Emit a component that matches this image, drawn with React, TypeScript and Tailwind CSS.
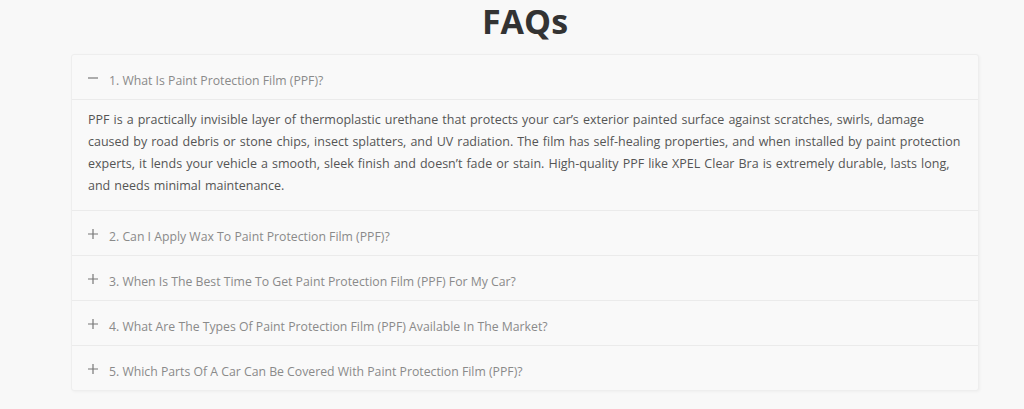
import { useState } from "react";

const faqs = [
  {
    q: "1. What Is Paint Protection Film (PPF)?",
    a: "PPF is a practically invisible layer of thermoplastic urethane that protects your car’s exterior painted surface against scratches, swirls, damage caused by road debris or stone chips, insect splatters, and UV radiation. The film has self-healing properties, and when installed by paint protection experts, it lends your vehicle a smooth, sleek finish and doesn’t fade or stain. High-quality PPF like XPEL Clear Bra is extremely durable, lasts long, and needs minimal maintenance.",
  },
  { q: "2. Can I Apply Wax To Paint Protection Film (PPF)?", a: "" },
  { q: "3. When Is The Best Time To Get Paint Protection Film (PPF) For My Car?", a: "" },
  { q: "4. What Are The Types Of Paint Protection Film (PPF) Available In The Market?", a: "" },
  { q: "5. Which Parts Of A Car Can Be Covered With Paint Protection Film (PPF)?", a: "" },
];

function Icon({ open }: { open: boolean }) {
  return (
    <svg className="w-[10px] h-[10px] text-[#777] mt-[18px] shrink-0" viewBox="0 0 10 10" fill="none" stroke="currentColor" strokeWidth="1.2">
      {open ? <path d="M0 5h10" /> : <path d="M0 5h10M5 0v10" />}
    </svg>
  );
}

export default function App() {
  const [openIdx, setOpenIdx] = useState(0);

  return (
    <div className="min-h-[409px] bg-[#f8f8f8] pl-[26px] pt-[1px] font-['Open_Sans','Liberation_Sans',sans-serif]">
      <h1 className="text-center text-[34px] leading-[40px] font-bold text-[#333]">FAQs</h1>
      <div className="mx-auto mt-[13px] w-[908px] bg-[#f9f9f9] border border-[#eeeeee] rounded-[3px] shadow-[1px_1px_3px_rgba(0,0,0,0.04)]">
        {faqs.map((f, i) => (
          <div key={i} className={i > 0 ? "border-t border-[#ebebeb]" : ""}>
            <button
              onClick={() => setOpenIdx(openIdx === i ? -1 : i)}
              className="flex w-full h-[44px] items-start gap-[11px] pl-[16px] text-left"
            >
              <Icon open={openIdx === i} />
              <span className="mt-[17px] text-[12.25px] leading-[17px] text-[#8a8a8a]">{f.q}</span>
            </button>
            {openIdx === i && f.a && (
              <div className="border-t border-[#ebebeb] px-[16px] pt-[9px] pb-[13px]">
                <p className="text-[12.5px] leading-[22px] [word-spacing:0.8px] text-[#555]">{f.a}</p>
              </div>
            )}
          </div>
        ))}
      </div>
    </div>
  );
}
